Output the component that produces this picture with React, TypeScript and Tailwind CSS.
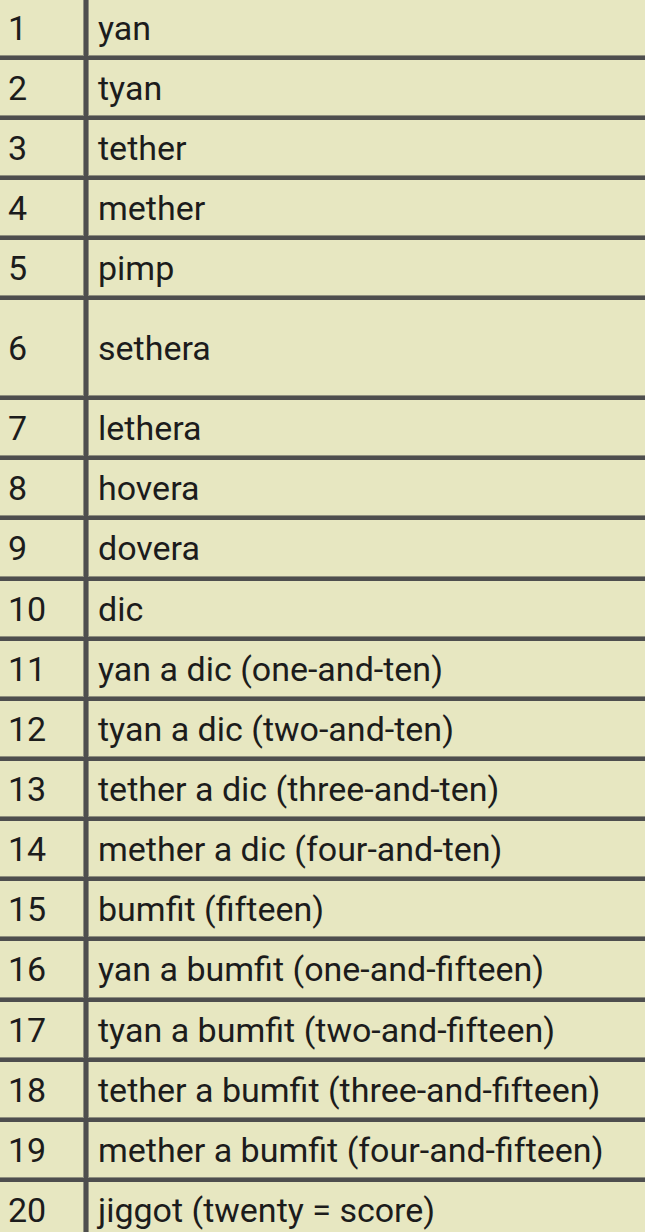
import React from "react";

const rows: [string, string][] = [
  ["1", "yan"],
  ["2", "tyan"],
  ["3", "tether"],
  ["4", "mether"],
  ["5", "pimp"],
  ["6", "sethera"],
  ["7", "lethera"],
  ["8", "hovera"],
  ["9", "dovera"],
  ["10", "dic"],
  ["11", "yan a dic (one-and-ten)"],
  ["12", "tyan a dic (two-and-ten)"],
  ["13", "tether a dic (three-and-ten)"],
  ["14", "mether a dic (four-and-ten)"],
  ["15", "bumfit (fifteen)"],
  ["16", "yan a bumfit (one-and-fifteen)"],
  ["17", "tyan a bumfit (two-and-fifteen)"],
  ["18", "tether a bumfit (three-and-fifteen)"],
  ["19", "mether a bumfit (four-and-fifteen)"],
  ["20", "jiggot (twenty = score)"],
];

function rowHeight(n: string) {
  if (n === "6") return "h-[96px]";
  if (n === "9" || n === "16") return "h-[57px]";
  return "h-[56px]";
}

export default function App() {
  return (
    <div className="w-[645px] h-[1232px] overflow-hidden bg-[#e7e7c1]">
      <div
        className="grid grid-cols-[84px_700px] gap-[4px] bg-[#4e4e4e] text-[#1c1c1c] text-[34px] leading-none w-[788px]"
        style={{ fontFamily: "Roboto, 'Noto Sans', sans-serif" }}
      >
        {rows.map(([n, w]) => {
          const h = rowHeight(n);
          return (
            <React.Fragment key={n}>
              <div className={`${h} bg-[#e7e7c1] flex items-center pl-[8px] border-r border-b border-[#8f8f7f]`}>
                {n}
              </div>
              <div className={`${h} bg-[#e7e7c1] flex items-center pl-[9px] border-l border-b border-[#8f8f7f]`}>
                {w}
              </div>
            </React.Fragment>
          );
        })}
      </div>
    </div>
  );
}
